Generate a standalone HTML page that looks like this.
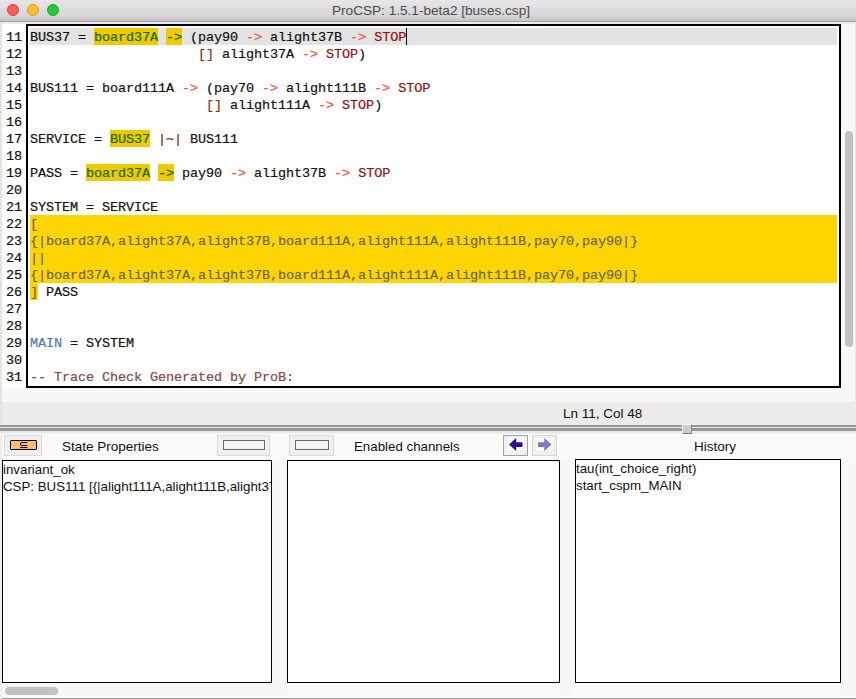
<!DOCTYPE html>
<html><head><meta charset="utf-8">
<style>
*{margin:0;padding:0;box-sizing:border-box}
html,body{width:856px;height:699px;overflow:hidden;background:#ececec;position:relative;font-family:"Liberation Sans",sans-serif}
.abs{position:absolute}
#title{left:0;top:0;width:856px;height:22px;background:linear-gradient(#e8e6e8,#d6d4d6 78%,#c6c4c6);border-bottom:1px solid #a2a0a2}
#title .t{position:absolute;left:3px;top:3px;width:856px;text-align:center;font-size:13.6px;color:#4a4a4a}
.dot{position:absolute;top:4px;width:12px;height:12px;border-radius:50%}
#edarea{left:0;top:22px;width:856px;height:366px;background:#fff;border-top:2px solid #efefef}
#lstrip{left:0;top:22px;width:2px;height:403px;background:#e4e4e4}
#ebox{left:26px;top:24px;width:815px;height:364px;border:2px solid #000;background:#fff}
#vtrack{left:841px;top:24px;width:15px;height:378px;background:#f8f8f8;border-right:1px solid #e9e9e9}
#vthumb{left:845px;top:131px;width:8px;height:216px;border-radius:4px;background:#c2c2c2}
#hstrip{left:0;top:388px;width:841px;height:14px;background:#f8f8f8}
#status{left:0;top:402px;width:856px;height:23px;background:#ecebea}
.code{font-family:"Liberation Mono",monospace;font-size:13.5px;letter-spacing:-0.1px;-webkit-text-stroke:0.2px currentColor;white-space:pre;line-height:17px;color:#111}
#gutter{left:0px;top:28.5px;width:22px;text-align:right}
#lines{left:30px;top:28.5px;white-space:normal}
.ln{height:17px;position:relative;white-space:pre}
.hlr{height:17px;background:#eecb00}
.hl{color:#146a04}
.hlo{color:#166a06}
.blk{color:#676767}
.blk2{color:#676767}
.ar{color:#f8553a}
.st{color:#990e12}
.br{color:#8a3010}
.ch{color:#8a1e0a}
.mn{color:#4a7ab8}
.cm{color:#7a4a44}
.caret{display:inline-block;width:1px;height:15px;background:#000;vertical-align:-3px;margin-left:0}

#split{left:0;top:425px;width:856px;height:8px;background:#e9e9e9}
.sl{position:absolute;left:0;width:856px;background:#989898}
#sthumb{left:682px;top:424px;width:10px;height:10px;background:#cdcbcb;border-top:1px solid #fff;border-left:1px solid #f4f4f4;border-right:1px solid #8a8a8a;border-bottom:1px solid #7a7a7a}
#bottom{left:0;top:433px;width:856px;height:266px;background:#fafafa;border-top:1px solid #efefef}
.btn{position:absolute;top:435px;height:21px;background:#f0f0f0;border:1px solid #d9d9d9}
.btn .in{position:absolute;background:#f6f6f6}
.rect{position:absolute;top:440px;height:10px;background:#f3f3f3;border:1px solid #6c6c6c}
.hdr{position:absolute;top:438.5px;font-size:13.5px;color:#111;white-space:nowrap}
.box{position:absolute;top:460px;height:223px;background:#fff;border:1px solid #000;overflow:hidden}
.ptxt{position:absolute;left:0px;top:-0.5px;font-size:13.3px;line-height:17px;color:#111;white-space:nowrap}
#hsb{left:2px;top:683px;width:270px;height:15px;background:#f8f8f8}
#hthumb{left:5px;top:687px;width:53px;height:8px;border-radius:4px;background:#c2c2c2}
#botline{left:0;top:698px;width:856px;height:1px;background:#9a9a9a}
</style></head><body>
<div id="title" class="abs">
  <div class="dot" style="left:7px;background:#fc5d57;border:1px solid #dc3d39"></div>
  <div class="dot" style="left:27px;background:#fbbe2f;border:1px solid #db9c20"></div>
  <div class="dot" style="left:47px;background:#27c83c;border:1px solid #19a52b"></div>
  <div class="t">ProCSP: 1.5.1-beta2 [buses.csp]</div>
</div>
<div id="edarea" class="abs"></div>

<div id="ebox" class="abs"></div>
<div id="vtrack" class="abs"></div>
<div id="vthumb" class="abs"></div>
<div id="hstrip" class="abs"></div>
<div id="status" class="abs"></div>

<div id="gutter" class="abs code">11
12
13
14
15
16
17
18
19
20
21
22
23
24
25
26
27
28
29
30
31</div>

<div class="abs" style="left:30px;top:28px;width:807px;height:17px;background:#e3e3e3"></div>
<div class="abs hlr" style="left:94px;top:28px;width:64px"></div>
<div class="abs hlr" style="left:166px;top:28px;width:16px"></div>
<div class="abs hlr" style="left:110px;top:130px;width:40px"></div>
<div class="abs hlr" style="left:86px;top:164px;width:64px"></div>
<div class="abs hlr" style="left:158px;top:164px;width:16px"></div>
<div class="abs" style="left:30px;top:215px;width:807px;height:68px;background:#ffd500"></div>
<div class="abs" style="left:30px;top:283px;width:8px;height:17px;background:#ffd500"></div>
<div class="abs" style="left:406px;top:28px;width:1px;height:17px;background:#000;z-index:2"></div>
<div id="lines" class="abs code">
<div class="ln">BUS37 = <span class="hl">board37A</span> <span class="hlo">-&gt;</span> (pay90 <span class="ar">-&gt;</span> alight37B <span class="ar">-&gt;</span> <span class="st">STOP</span></div>
<div class="ln">                     <span class="br">[]</span> alight37A <span class="ar">-&gt;</span> <span class="st">STOP</span>)</div>
<div class="ln"></div>
<div class="ln">BUS111 = board111A <span class="ar">-&gt;</span> (pay70 <span class="ar">-&gt;</span> alight111B <span class="ar">-&gt;</span> <span class="st">STOP</span></div>
<div class="ln">                      <span class="br">[]</span> alight111A <span class="ar">-&gt;</span> <span class="st">STOP</span>)</div>
<div class="ln"></div>
<div class="ln">SERVICE = <span class="hl">BUS37</span> <span class="ch">|~|</span> BUS111</div>
<div class="ln"></div>
<div class="ln">PASS = <span class="hl">board37A</span> <span class="hlo">-&gt;</span> pay90 <span class="ar">-&gt;</span> alight37B <span class="ar">-&gt;</span> <span class="st">STOP</span></div>
<div class="ln"></div>
<div class="ln">SYSTEM = SERVICE</div>
<div class="ln blk">[</div>
<div class="ln blk">{|board37A,alight37A,alight37B,board111A,alight111A,alight111B,pay70,pay90|}</div>
<div class="ln blk">||</div>
<div class="ln blk">{|board37A,alight37A,alight37B,board111A,alight111A,alight111B,pay70,pay90|}</div>
<div class="ln"><span class="blk2">]</span> PASS</div>
<div class="ln"></div>
<div class="ln"></div>
<div class="ln"><span class="mn">MAIN</span> = SYSTEM</div>
<div class="ln"></div>
<div class="ln"><span class="cm">-- Trace Check Generated by ProB:</span></div>
</div>


<div id="status_t" class="abs" style="left:563px;top:406px;font-size:13.5px;color:#111;white-space:nowrap">Ln 11, Col 48</div>
<div id="lstrip" class="abs"></div>
<div class="abs" style="left:0;top:433px;width:2px;height:266px;background:#ececec;z-index:1"></div>
<div id="split" class="abs"><div class="sl" style="top:0;height:2px"></div><div class="sl" style="top:3px;height:3px"></div></div>
<div id="bottom" class="abs"></div>
<div id="sthumb" class="abs"></div>
<div class="btn" style="left:4px;width:38px"></div>
<div class="abs" style="left:10px;top:440px;width:27px;height:10px;background:#f8c06e;border:1px solid #0a0a0a;border-radius:1px"></div>
<svg class="abs" style="left:19px;top:441px" width="9" height="8" viewBox="0 0 9 8"><path d="M8 1.5H2.8Q1.5 1.5 1.5 2.8V3.2Q1.5 4.5 2.8 4.5H8M1.5 6.5H8" stroke="#1c0c58" stroke-width="1.1" fill="none" stroke-linecap="round"/></svg>
<div class="hdr" style="left:62px">State Properties</div>
<div class="btn" style="left:217px;width:53px"></div>
<div class="rect" style="left:223px;width:42px"></div>
<div class="btn" style="left:289px;width:45px"></div>
<div class="rect" style="left:295px;width:34px"></div>
<div class="hdr" style="left:354px;font-size:13.3px;top:439px">Enabled channels</div>
<div class="btn" style="left:503px;width:25px;border:1.5px solid #a2a2a2"></div>
<div class="abs" style="left:507px;top:438px;width:17px;height:13px;background:#fbfbfb"></div>
<svg class="abs" style="left:508.5px;top:438px" width="14" height="14" viewBox="0 0 14 14"><path d="M0 6.5L7.2 0V4.2H13.5V9H7.2V13Z" fill="#2e0a96"/></svg>
<div class="btn" style="left:532px;width:25px;border:1.5px solid #d6d6d6"></div>
<div class="abs" style="left:536px;top:438px;width:17px;height:13px;background:#f8f8f8"></div>
<svg class="abs" style="left:538px;top:438px" width="14" height="14" viewBox="0 0 14 14"><path d="M13.5 6.5L6.3 0V4.2H0V9H6.3V13Z" fill="#8c72c8"/></svg>
<div class="hdr" style="left:694px">History</div>
<div class="box" style="left:2px;width:270px;height:223px"><div class="ptxt">invariant_ok<br>CSP: BUS111 [{|alight111A,alight111B,alight37A,alight37B,pay70|}]</div></div>
<div class="box" style="left:287px;width:273px;height:223px"></div>
<div class="box" style="left:575px;width:266px;top:459px;height:224px"><div class="ptxt">tau(int_choice_right)<br>start_cspm_MAIN</div></div>
<div class="abs" style="left:272px;top:460px;width:15px;height:238px;background:#f8f8f8"></div>
<div class="abs" style="left:560px;top:460px;width:12px;height:238px;background:#f8f8f8"></div>
<div class="abs" style="left:841px;top:459px;width:15px;height:239px;background:#f8f8f8"></div>
<div id="hsb" class="abs"></div>
<div id="hthumb" class="abs"></div>
<div id="botline" class="abs"></div>
</body></html>
